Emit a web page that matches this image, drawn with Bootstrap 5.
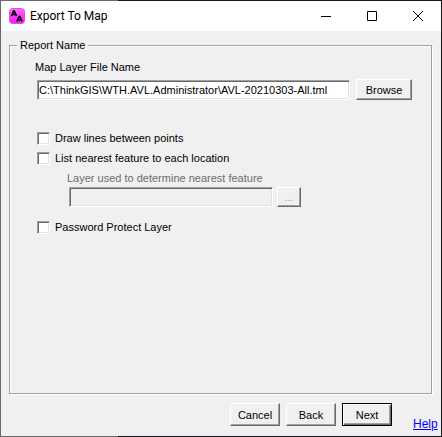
<!DOCTYPE html>
<html lang="en">
<head>
<meta charset="utf-8">
<meta name="viewport" content="width=device-width, initial-scale=1">
<title>Export To Map</title>
<link href="https://cdn.jsdelivr.net/npm/bootstrap@5.3.0/dist/css/bootstrap.min.css" rel="stylesheet">
<style>
body { font: 11px/14px "Liberation Sans", Arial, sans-serif; color: #000; background: #f0f0f0; }
.frame { padding: 1px; background: linear-gradient(90deg, #696969 118px, #16161a 118px); }
.face { background: #f0f0f0; }
.titlebar { height: 30px; padding-left: 8px; background: #fff; font: 12px/16px Roboto, "Open Sans", sans-serif; }
.title-text { padding-left: 5px; }
.win-btn { width: 46px; height: 30px; padding: 0; border: 0; background: none; line-height: 0; }
.group { margin: 7px 9px 0 8px; padding: 0 19px 16px 25px; border: 1px solid #a0a0a0; box-shadow: 1px 1px 0 #fff, inset 1px 1px 0 #fff; }
.group-title { float: none; width: auto; margin: 0 0 0 -18px; padding: 0 3px; font-size: 11px; line-height: 14px; background: #f0f0f0; }
.sunken { min-width: 0; height: 20px; padding: 0 1px; border: 1px solid; border-color: #a0a0a0 #fff #fff #a0a0a0; box-shadow: inset 1px 1px 0 #696969, inset -1px -1px 0 #e3e3e3; background: #fff; color: #000; border-radius: 0; font-size: 11px; outline: 0; }
.sunken:disabled { background: #f0f0f0; }
.push { height: 23px; padding: 0; border: 1px solid; border-color: #fff #696969 #696969 #fff; box-shadow: inset -1px -1px 0 #a0a0a0; background: #f0f0f0; color: #000; font-size: 11px; line-height: 14px; }
.push:disabled { color: #a0a0a0; }
.push-browse { width: 56px; height: 21px; }
.push-more { width: 24px; height: 20px; }
.push-step { width: 50px; margin-bottom: 5px; }
.push-default { border-color: #000; box-shadow: inset 1px 1px 0 #fff, inset -1px -1px 0 #696969, inset -2px -2px 0 #a0a0a0; }
.field-label { margin: 10px 0 6px; }
.options { margin-top: 28px; padding-left: 2px; }
.path-row { padding-left: 2px; gap: 6px; }
.tick { appearance: none; width: 13px; height: 13px; margin: 0; border: 1px solid; border-color: #a0a0a0 #fff #fff #a0a0a0; box-shadow: inset 1px 1px 0 #696969, inset -1px -1px 0 #e3e3e3; background: #fff; }
.tick:checked { background: #000 content-box; padding: 2px; }
.option { height: 20px; gap: 5px; }
.nested { padding-left: 32px; }
.nested-label { margin: 3px 0 2px -2px; color: #6d6d6d; }
.nested-path { width: 204px; }
.last-option { margin-top: 10px; }
.actions { gap: 6px; padding: 9px 4px 5px 8px; }
.help { width: 24px; margin-left: 15px; color: #00f; font-size: 12px; }
</style>
<script src="https://cdn.jsdelivr.net/npm/bootstrap@5.3.0/dist/js/bootstrap.bundle.min.js" defer></script>
</head>
<body>
<div class="frame min-vh-100 d-flex">
  <form class="face flex-grow-1 d-flex flex-column">
    <header class="titlebar d-flex align-items-center">
      <svg width="16" height="16" viewBox="0 0 16 16" aria-hidden="true">
        <defs><linearGradient id="pink" x2="0" y2="1"><stop stop-color="#ff70ff"/><stop offset=".5" stop-color="#ff38ff"/><stop offset="1" stop-color="#f020f0"/></linearGradient></defs>
        <rect x=".5" y=".5" width="15" height="15" rx="3" fill="url(#pink)" stroke="#e04ce0"/>
        <path d="M2.500 8 4.500 3h.8L7.500 8M3.500 6.500h3M7.800 13.500l2.300-5h.8l2.200 5M9 12h3" fill="none" stroke="#000" stroke-width="1.600"/>
      </svg>
      <span class="title-text me-auto text-nowrap">Export To Map</span>
      <button type="button" class="win-btn" aria-label="Minimize"><svg width="10" height="10"><path d="M0 5.500h10" stroke="#000"/></svg></button>
      <button type="button" class="win-btn" aria-label="Maximize"><svg width="10" height="10"><path d="M.5.5h9v9h-9z" fill="none" stroke="#000"/></svg></button>
      <button type="button" class="win-btn" aria-label="Close"><svg width="10" height="10"><path d="m0 0 10 10M10 0 0 10" stroke="#000"/></svg></button>
    </header>
    <fieldset class="group flex-grow-1">
      <legend class="group-title">Report Name</legend>
      <label class="field-label d-block lh-1" for="path">Map Layer File Name</label>
      <div class="path-row d-flex align-items-center">
        <input id="path" class="sunken flex-grow-1" type="text" value="C:\ThinkGIS\WTH.AVL.Administrator\AVL-20210303-All.tml">
        <button type="button" class="push push-browse">Browse</button>
      </div>
      <div class="options">
        <div class="option d-flex align-items-center"><input id="lines" class="tick" type="checkbox"><label for="lines">Draw lines between points</label></div>
        <div class="option d-flex align-items-center"><input id="nearest" class="tick" type="checkbox"><label for="nearest">List nearest feature to each location</label></div>
        <div class="nested">
          <label class="nested-label d-block" for="layer">Layer used to determine nearest feature</label>
          <div class="d-flex gap-1">
            <input id="layer" class="sunken nested-path" type="text" disabled>
            <button type="button" class="push push-more" aria-label="Choose layer" disabled>...</button>
          </div>
        </div>
        <div class="option last-option d-flex align-items-center"><input id="protect" class="tick" type="checkbox"><label for="protect">Password Protect Layer</label></div>
      </div>
    </fieldset>
    <footer class="actions d-flex justify-content-end">
      <button type="button" class="push push-step">Cancel</button>
      <button type="button" class="push push-step">Back</button>
      <button type="submit" class="push push-step push-default">Next</button>
      <a class="help align-self-end" href="#help">Help</a>
    </footer>
  </form>
</div>
</body>
</html>
